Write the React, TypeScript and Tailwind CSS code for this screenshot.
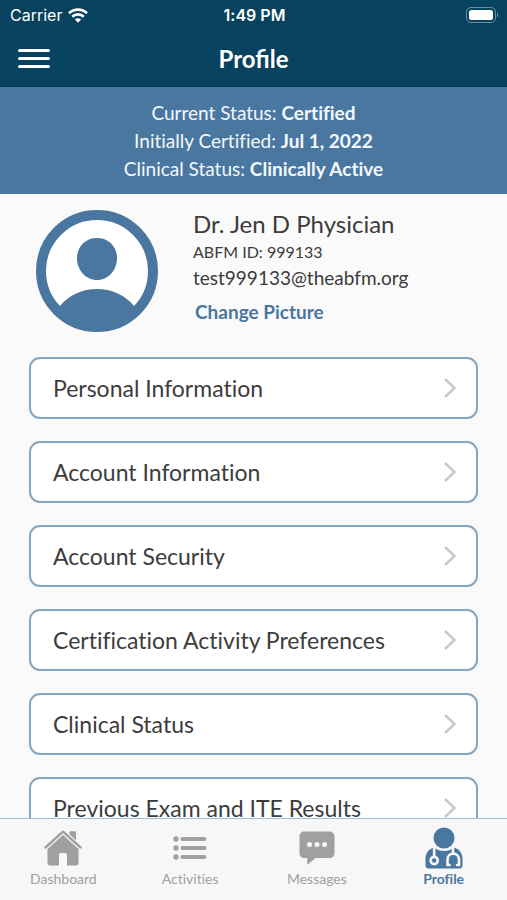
import { useState } from "react";

type Tab = {
  name: string;
  icon: React.ReactNode;
};

const statuses = [
  { label: "Current Status:", value: "Certified" },
  { label: "Initially Certified:", value: "Jul 1, 2022" },
  { label: "Clinical Status:", value: "Clinically Active" },
];

const sections = [
  "Personal Information",
  "Account Information",
  "Account Security",
  "Certification Activity Preferences",
  "Clinical Status",
  "Previous Exam and ITE Results",
];

const HomeIcon = () => (
  <svg width="38" height="36" viewBox="0 0 38 36" fill="currentColor" aria-hidden="true">
    <path d="M25.500 2.500c0-.7.500-1.200 1.200-1.200h4.100c.7 0 1.200.5 1.200 1.200V13l-6.500-6z" />
    <path d="M19 4.800 34.500 18.800V33c0 1.600-.9 2.500-2.500 2.500H23v-10.500c0-1.200-.7-1.900-1.900-1.900h-4.200c-1.200 0-1.900.7-1.900 1.900v10.500H6c-1.600 0-2.500-.9-2.500-2.500V18.800z" />
    <path d="M1.500 17.500 19 1.600 36.500 17.500" fill="none" stroke="#f7f7f7" strokeWidth="4.600" />
    <path d="M1.500 17.500 19 1.600 36.500 17.500" fill="none" stroke="currentColor" strokeWidth="2.400" strokeLinecap="round" strokeLinejoin="round" />
  </svg>
);

const ListIcon = () => (
  <svg width="34" height="24" viewBox="0 0 34 24" fill="currentColor" aria-hidden="true">
    {[3, 12, 21].map((y) => (
      <g key={y}>
        <circle cx="3" cy={y} r="2.700" />
        <rect x="7.500" y={y - 2} width="26" height="4" rx="2" />
      </g>
    ))}
  </svg>
);

const ChatIcon = () => (
  <svg width="36" height="34" viewBox="0 0 36 34" fill="currentColor" aria-hidden="true">
    <path d="M5.500.5h25c3 0 5 2 5 5v16.500c0 3-2 5-5 5H16.500L9.200 33.200c-.5.400-1 .2-1-.500V27H5.500c-3 0-5-2-5-5V5.500c0-3 2-5 5-5z" />
    <g fill="#f7f7f7">
      <circle cx="10.500" cy="13.500" r="2.500" />
      <circle cx="18" cy="13.500" r="2.500" />
      <circle cx="25.500" cy="13.500" r="2.500" />
    </g>
  </svg>
);

const DoctorIcon = () => (
  <svg width="38" height="42" viewBox="0 0 38 42" fill="currentColor" aria-hidden="true">
    <circle cx="19" cy="11" r="10.500" />
    <path d="M9 20.500C3.500 22 .5 26.500.5 32v6.500C.5 40.300 1.700 41.500 3.500 41.500h31c1.800 0 3-1.200 3-3V32c0-5.500-3-10-8.500-11.500-3 2.500-6.300 3.500-10 3.500s-7-1-10-3.500z" />
    <g fill="none" stroke="#f7f7f7" strokeWidth="2.600">
      <path d="M9.200 20v10" />
      <circle cx="9.200" cy="33.500" r="3.600" />
      <path d="M28 20v6.500" />
      <path d="M24.500 38H22.500V33c0-8.500 11.500-8.500 11.500 0v5h-2" strokeLinecap="round" />
    </g>
  </svg>
);

const tabs: Tab[] = [
  { name: "Dashboard", icon: <HomeIcon /> },
  { name: "Activities", icon: <ListIcon /> },
  { name: "Messages", icon: <ChatIcon /> },
  { name: "Profile", icon: <DoctorIcon /> },
];

const StatusBar = () => (
  <div className="grid h-[30px] grid-cols-3 items-center pl-[10px] pr-2 font-['Inter',sans-serif] text-[16px] leading-5">
    <div className="flex items-center gap-[6px]">
      <span>Carrier</span>
      <svg width="20" height="15" viewBox="0 0 20 15" fill="none" stroke="currentColor" strokeWidth="2.600" aria-hidden="true">
        <path d="M1 5.200a13 13 0 0 1 18 0" />
        <path d="M4.200 8.700a8.400 8.400 0 0 1 11.600 0" />
        <path d="M10 14.800 6.900 11.600a4.500 4.500 0 0 1 6.200 0z" fill="currentColor" stroke="none" />
      </svg>
    </div>
    <span className="text-center font-semibold">1:49 PM</span>
    <svg className="justify-self-end" width="33" height="16" viewBox="0 0 33 16" aria-hidden="true">
      <rect x="0.500" y="0.500" width="29" height="15" rx="4.500" fill="none" stroke="#fff" strokeOpacity="0.400" />
      <rect x="3" y="3" width="24" height="10" rx="2.500" fill="#fff" />
      <path d="M31 5.500c1.600.6 1.600 4.400 0 5z" fill="#fff" fillOpacity="0.400" />
    </svg>
  </div>
);

const Avatar = () => (
  <svg className="shrink-0" width="122" height="122" viewBox="0 0 122 122" role="img" aria-label="Profile picture">
    <circle cx="61" cy="61" r="56" fill="#fff" stroke="#49779f" strokeWidth="10" />
    <path d="M61 28c11.500 0 20 8.500 20 20 0 12-8.500 22-20 22s-20-10-20-22c0-11.500 8.500-20 20-20z" fill="#49779f" />
    <path d="M24 96c9-11 22-17 37-17s28 6 37 17l5 1c-10 14-25 22-42 22s-32-8-42-22z" fill="#49779f" />
  </svg>
);

export default function App() {
  const [active, setActive] = useState("Profile");

  return (
    <div className="flex h-screen flex-col bg-[#fafafa] font-['Lato',sans-serif] text-[#3c3c3c] [font-variant-ligatures:none]">
      <header className="bg-[#07435e] text-white">
        <StatusBar />
        <div className="grid h-[57px] grid-cols-[32px_1fr_32px] items-center px-[18px]">
          <button aria-label="Open menu" className="flex flex-col gap-[5px]">
            <span className="h-[3px] w-8 rounded-full bg-white" />
            <span className="h-[3px] w-8 rounded-full bg-white" />
            <span className="h-[3px] w-8 rounded-full bg-white" />
          </button>
          <h1 className="text-center text-[24px] font-bold leading-8 [font-variant-ligatures:normal]">Profile</h1>
        </div>
      </header>

      <main className="min-h-0 flex-1 overflow-y-auto [scrollbar-width:none]">
        {/* Certification summary */}
        <div className="bg-[#49779f] pb-[11px] pt-3 text-center text-[19px] leading-7 text-[#f3f8fc]">
          {statuses.map((s) => (
            <p key={s.label}>
              {s.label} <strong>{s.value}</strong>
            </p>
          ))}
        </div>

        {/* Physician details */}
        <div className="flex items-start gap-[35px] px-9 pt-4">
          <Avatar />
          <div className="min-w-0">
            <h2 className="text-[24px] leading-7">Dr. Jen D Physician</h2>
            <p className="mt-[2px] text-[16px] leading-6">ABFM ID: 999133</p>
            <p className="text-[19px] leading-7">test999133@theabfm.org</p>
            <button className="mt-[6px] px-[2px] text-[19px] font-bold leading-7 text-[#49779f]">
              Change Picture
            </button>
          </div>
        </div>

        <ul className="flex flex-col gap-[22px] px-[29px] pb-6 pt-[25px]">
          {sections.map((section) => (
            <li key={section}>
              <button className="flex h-[62px] w-full items-center justify-between rounded-[11px] border-2 border-[#85a5c0] bg-white pl-[22px] pr-5 text-left text-[23px] leading-8">
                {section}
                <svg width="14" height="20" viewBox="0 0 14 20" fill="none" stroke="#c9c9c9" strokeWidth="2.500" aria-hidden="true">
                  <path d="M3 1l9.500 9L3 19" />
                </svg>
              </button>
            </li>
          ))}
        </ul>
      </main>

      <nav className="grid h-[82px] shrink-0 grid-cols-4 border-t border-[#a3bdd8] bg-[#f7f7f7]">
        {tabs.map((tab) => (
          <button
            key={tab.name}
            onClick={() => setActive(tab.name)}
            className={`flex flex-col items-center pt-2 text-[14px] leading-5 ${
              active === tab.name ? "font-bold text-[#49779f]" : "text-[#a0a0a0]"
            }`}
          >
            <span className="flex h-[42px] items-center">{tab.icon}</span>
            {tab.name}
          </button>
        ))}
      </nav>
    </div>
  );
}
